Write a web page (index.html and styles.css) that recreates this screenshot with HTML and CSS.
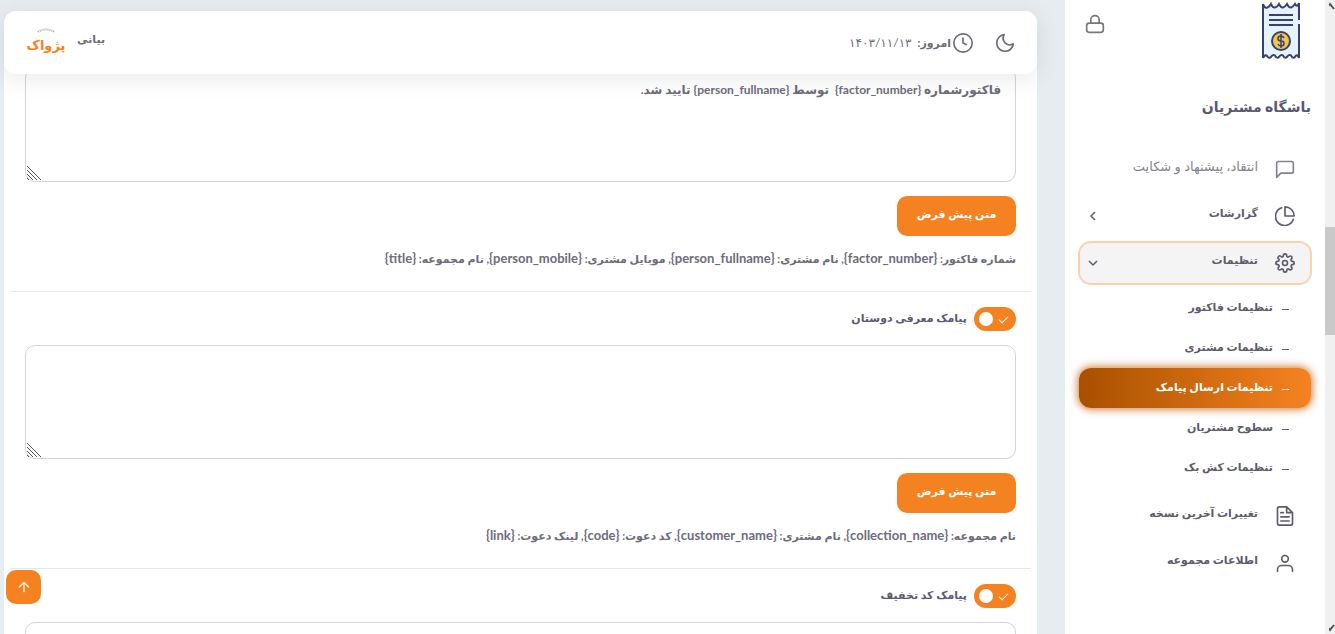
FILE: index.html
```html
<!DOCTYPE HTML>
<html lang="fa" dir="rtl">
    <head>
        <meta charset="UTF-8">
        <title>باشگاه مشتریان</title>
        <link rel="stylesheet" href="styles.css">
    </head>
    <body>
        <div class="scroll">
            <svg class="arrow" viewBox="0 0 10 12"><path d="M-3 9 1 4l4 5"/></svg>
            <div class="thumb"></div>
            <svg class="arrow" viewBox="0 0 10 12"><path d="M-3 3 1 8l4-5"/></svg>
        </div>

        <aside class="sidebar">
            <div class="brand">
                <svg class="bill" viewBox="0 0 38 58">
                    <path d="M1 2l3 3 3-3q2 0 3 3 3 0 3-3l3 3q3 0 3-3 1 3 3 3l3-3 3 3 3-3 3 3 3-3v54l-3-3-3 3-3-3-3 3-3-3q-2 0-3 3l-3-3q-3 0-3 3l-3-3-3 3-3-3-3 3z" fill="#e7f2ff"/>
                    <path d="M1 56V2q2 5 4.500 3.500T9 2q1.500 4 4 3.500T17 2q2 4 4 3.500T25 2q2 4 4 3.500T33 2q2 4 4-1v17M37 22v34q-2-5-4-1-2 2-4-1.500Q27 52 25 55q-2 2-4-1.500Q19 52 17 55q-2 2-4-1.500Q11 52 9 55q-2 2-4-1Q3 52 1 56" fill="none" stroke="#39406f" stroke-width="2"/>
                    <path d="M7 13h24M7 18h24M7 23h24" stroke="#39406f" stroke-width="2"/>
                    <circle cx="19" cy="39" r="9" fill="#f0c54b" stroke="#39406f" stroke-width="2"/>
                    <path d="M22 36q-1-2-3-2-3 0-3 2.500T19 39t3 2.500-3 2.500q-2 0-3-2M19 32v14" fill="none" stroke="#39406f" stroke-width="1.500"/>
                </svg>
                <button class="lock" aria-label="قفل منو">
                    <svg class="icon" viewBox="0 0 24 24"><rect x="2" y="11" width="20" height="11" rx="3"/><path d="M7 11V7a5 5 0 0 1 10 0v4"/></svg>
                </button>
            </div>
            <h2>باشگاه مشتریان</h2>
            <ul class="menu">
                <li><a href="#" class="light">
                    <svg class="icon" viewBox="0 0 24 24"><path d="M22 15a2 2 0 0 1-2 2H7l-5 5V5a2 2 0 0 1 2-2h16a2 2 0 0 1 2 2z"/></svg>
                    <span>انتقاد، پیشنهاد و شکایت</span>
                </a></li>
                <li><a href="#">
                    <svg class="icon" viewBox="0 0 24 24"><path d="M22 16A11 11 0 1 1 8 2M23 12A11 11 0 0 0 12 1v11z"/></svg>
                    <span>گزارشات</span>
                    <svg class="chev" viewBox="0 0 12 12"><path d="M8 2 4 6l4 4"/></svg>
                </a></li>
                <li><a href="#" class="open">
                    <svg class="icon" viewBox="0 0 24 24"><circle cx="12" cy="12" r="3"/><path d="M19.400 15a1.650 1.650 0 0 0 .33 1.820l.06.06a2 2 0 1 1-2.830 2.830l-.06-.06a1.650 1.650 0 0 0-2.800 1.170V21a2 2 0 0 1-4 0v-.09a1.650 1.650 0 0 0-2.900-1.200l-.06.06a2 2 0 1 1-2.830-2.830l.06-.06A1.650 1.650 0 0 0 3.100 14H3a2 2 0 0 1 0-4h.09a1.650 1.650 0 0 0 1.200-2.900l-.06-.06a2 2 0 1 1 2.830-2.830l.06.06A1.650 1.650 0 0 0 10 3.100V3a2 2 0 0 1 4 0v.09a1.650 1.650 0 0 0 2.900 1.200l.06-.06a2 2 0 1 1 2.830 2.830l-.06.06A1.650 1.650 0 0 0 20.900 10H21a2 2 0 0 1 0 4h-.09a1.650 1.650 0 0 0-1.510 1z"/></svg>
                    <span>تنظیمات</span>
                    <svg class="chev" viewBox="0 0 12 12"><path d="m2 4 4 4 4-4"/></svg>
                </a>
                    <ul class="sub">
                        <li><a href="#">تنظیمات فاکتور</a></li>
                        <li><a href="#">تنظیمات مشتری</a></li>
                        <li><a href="#" class="active">تنظیمات ارسال پیامک</a></li>
                        <li><a href="#">سطوح مشتریان</a></li>
                        <li><a href="#">تنظیمات کش بک</a></li>
                    </ul>
                </li>
                <li><a href="#">
                    <svg class="icon" viewBox="0 0 24 24"><path d="M14 1H5a2 2 0 0 0-2 2v18a2 2 0 0 0 2 2h14a2 2 0 0 0 2-2V8zM14 1v7h7M17 13H7M17 18H7M10 8H7"/></svg>
                    <span>تغییرات آخرین نسخه</span>
                </a></li>
                <li><a href="#">
                    <svg class="icon" viewBox="0 0 24 24"><path d="M21 22v-2a5 5 0 0 0-5-5H8a5 5 0 0 0-5 5v2"/><circle cx="12" cy="7" r="4"/></svg>
                    <span>اطلاعات مجموعه</span>
                </a></li>
            </ul>
        </aside>

        <main>
            <header class="navbar">
                <button class="moon" aria-label="حالت شب">
                    <svg class="icon" viewBox="0 0 24 24"><path d="M22 13A10 10 0 1 1 11 2a8 8 0 0 0 11 11z"/></svg>
                </button>
                <div class="today">
                    <svg class="icon" viewBox="0 0 24 24"><circle cx="12" cy="12" r="11"/><path d="M12 6v6l4 2"/></svg>
                    <b>امروز:</b>
                    <span>۱۴۰۳/۱۱/۱۳</span>
                </div>
                <div class="user">
                    <b>بیانی</b>
                    <svg class="avatar" viewBox="0 0 40 40">
                        <path d="M12 9q7-5 17 0" stroke="#aaa" stroke-width="2" stroke-dasharray="1 1" fill="none"/>
                        <text x="20" y="27" text-anchor="middle">پژواک</text>
                    </svg>
                </div>
            </header>

            <div class="card">
                <section>
                    <div class="area">
                        <textarea aria-label="متن پیامک تایید فاکتور">فاکتورشماره {factor_number}  توسط {person_fullname} تایید شد.</textarea>
                        <svg class="grip" viewBox="0 0 15 15"><path d="M0 1l14 14M0 5l10 10M0 9l6 6M0 13l2 2"/></svg>
                    </div>
                    <button class="btn">متن پیش فرض</button>
                    <p>شماره فاکتور: <code>{factor_number}</code>, نام مشتری: <code>{person_fullname}</code>, موبایل مشتری: <code>{person_mobile}</code>, نام مجموعه: <code>{title}</code></p>
                </section>
                <section>
                    <label class="switch">
                        <input type="checkbox" checked>
                        <span>پیامک معرفی دوستان</span>
                    </label>
                    <div class="area">
                        <textarea aria-label="متن پیامک معرفی دوستان"></textarea>
                        <svg class="grip" viewBox="0 0 15 15"><path d="M0 1l14 14M0 5l10 10M0 9l6 6M0 13l2 2"/></svg>
                    </div>
                    <button class="btn">متن پیش فرض</button>
                    <p>نام مجموعه: <code>{collection_name}</code>, نام مشتری: <code>{customer_name}</code>, کد دعوت: <code>{code}</code>, لینک دعوت: <code>{link}</code></p>
                </section>
                <section>
                    <label class="switch">
                        <input type="checkbox" checked>
                        <span>پیامک کد تخفیف</span>
                    </label>
                    <div class="area">
                        <textarea aria-label="متن پیامک کد تخفیف"></textarea>
                    </div>
                </section>
            </div>
        </main>

        <button class="top" aria-label="بازگشت به بالا">
            <svg class="icon" viewBox="0 0 24 24"><path d="M12 20V5M4 12l8-8 8 8"/></svg>
        </button>
    </body>
</html>
```
FILE: styles.css
```css
*{box-sizing:border-box;}
body,h2,p{margin:0;}
ul{margin:0;padding:0;list-style:none;}
a{color:inherit;text-decoration:none;}
button{padding:0;border:none;background:none;color:inherit;font:inherit;cursor:pointer;}
body{
    display:flex;
    height:100vh;
    overflow:hidden;
    font:bold 11px/22px Lato,"DejaVu Sans",sans-serif;
    color:#6e6b7b;
    background:#e7ecf0;
}
.icon{
    display:block;
    width:20px;
    height:20px;
    fill:none;
    stroke:currentColor;
    stroke-width:2;
    stroke-linecap:round;
    stroke-linejoin:round;
}

/* scrollbar */
.scroll{
    flex:none;
    display:flex;
    flex-direction:column;
    width:10px;
    background:#f0f0f0;
}
.scroll .arrow{
    width:10px;
    height:12px;
    margin-right:-4px;
    fill:none;
    stroke:#505050;
    stroke-width:2;
}
.scroll .thumb{
    height:17%;
    margin:215px 0 auto;
    background:#c9c9c9;
}

/* sidebar */
.sidebar{
    flex:none;
    width:260px;
    padding:2px 14px 0;
    background:#fff;
    color:#5e5b6b;
}
.brand{
    display:flex;
    justify-content:space-between;
    padding:0 11px 0 6px;
}
.brand .bill{
    width:38px;
    height:58px;
}
.brand .lock{
    height:20px;
    margin-top:12px;
    color:#777;
}
.sidebar h2{
    margin:36px 0 30px;
    font-size:14px;
    line-height:22px;
    color:#5b5671;
}
.menu>li{margin-bottom:5px;}
.menu>li>a{
    display:flex;
    align-items:center;
    height:42px;
    padding:0 16px 0 8px;
    border-radius:12px;
}
.menu>li>a span{
    flex:1;
    padding:0 17px 6px 0;
}
.menu .light{
    color:#85838e;
    font-size:13px;
    font-weight:normal;
}
.menu .open{
    background:#f4f4f5;
    box-shadow:0 0 0 1px #fbd0aa,inset 0 0 0 1px #fbd0aa;
}
.chev{
    width:12px;
    height:12px;
    fill:none;
    stroke:currentColor;
    stroke-width:1.5;
}
.sub{padding:4px 0 2px;}
.sub a{
    display:flex;
    height:40px;
    padding:8px 22px 0 0;
    border-radius:12px;
}
.sub a::before{
    content:"";
    width:7px;
    height:1px;
    margin:13px 0 0 9px;
    background:currentColor;
}
.sub .active{
    color:#fff;
    background:linear-gradient(to left,#f58220,#a85000);
    box-shadow:0 0 8px 1px #c8762f;
}

/* content */
main{
    flex:1;
    min-width:0;
    padding:11px 28px 0 4px;
}
.navbar{
    position:relative;
    z-index:2;
    display:flex;
    align-items:center;
    height:63px;
    padding:0 22px;
    border-radius:12px;
    background:#fff;
    box-shadow:0 4px 24px rgba(34,41,47,.1);
}
.today{
    display:flex;
    align-items:center;
    gap:2px;
    margin-right:22px;
}
.today span{
    padding-right:4px;
    font-size:12px;
    font-weight:normal;
}
.user{
    display:flex;
    align-items:center;
    gap:11px;
    margin-right:auto;
}
.user b{padding-bottom:8px;}
.avatar{
    width:40px;
    height:40px;
}
.avatar text{
    font-size:13px;
    fill:#f58220;
}
.card{
    margin-top:-20px;
    padding:14px 6px 0;
    background:#fff;
}
section{padding:0 15px 22px;}
section+section{
    padding-top:15px;
    border-top:1px solid #e6e6ec;
}
.area{position:relative;}
textarea{
    display:block;
    width:100%;
    height:114px;
    padding:10px 14px;
    border:1px solid #d3d3d8;
    border-radius:10px;
    background:#fff;
    color:inherit;
    font:inherit;
    font-size:12px;
    resize:none;
}
.grip{
    position:absolute;
    left:2px;
    bottom:2px;
    width:15px;
    height:15px;
    stroke:#555;
    stroke-width:1;
}
.btn{
    display:block;
    min-width:119px;
    height:40px;
    margin:14px 0 11px;
    padding-bottom:4px;
    border-radius:10px;
    background:#f58220;
    color:#fff;
}
p{height:22px;}
code{
    font-family:Lato,sans-serif;
    font-size:13px;
}
.switch{
    display:flex;
    align-items:center;
    gap:7px;
    height:24px;
    margin-bottom:14px;
    color:#5e5873;
}
.switch span{padding-bottom:2px;}
.switch input{
    position:relative;
    appearance:none;
    width:42px;
    height:24px;
    margin:0;
    border-radius:12px;
    background:#f58220;
}
.switch input::before{
    content:"";
    position:absolute;
    left:5px;
    top:5px;
    width:14px;
    height:14px;
    border-radius:50%;
    background:#fff;
}
.switch input::after{
    content:"";
    position:absolute;
    right:10px;
    top:7px;
    width:4px;
    height:8px;
    border:solid #fff;
    border-width:0 1px 1px 0;
    transform:rotate(45deg);
}
.top{
    position:fixed;
    left:6px;
    bottom:30px;
    display:flex;
    align-items:center;
    justify-content:center;
    width:35px;
    height:34px;
    border-radius:10px;
    background:#f58220;
    color:#fff;
}
.top .icon{
    width:14px;
    height:14px;
}
```
